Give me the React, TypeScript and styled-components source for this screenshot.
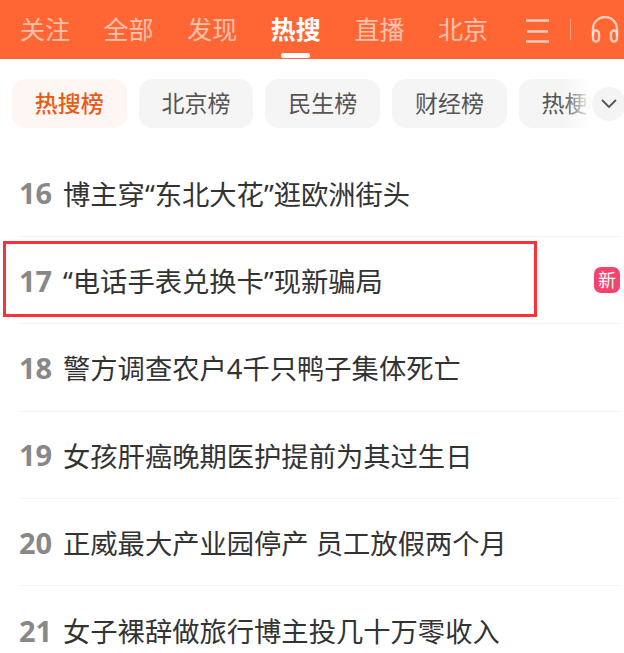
import React from 'react';
import styled, { createGlobalStyle } from 'styled-components';

const GlobalStyle = createGlobalStyle`
  html, body {
    margin: 0;
    padding: 0;
    background: #fff;
  }
  body {
    font-family: "Noto Sans", "Noto Sans CJK SC", sans-serif;
  }
`;

const Page = styled.div`
  position: relative;
  width: 624px;
  height: 653px;
  overflow: hidden;
`;

const TopBar = styled.div`
  display: flex;
  align-items: center;
  height: 59px;
  padding-left: 20px;
  background: #ff6633;
`;

const NavTabs = styled.div`
  display: flex;
  gap: 33.6px;
  width: 505px;
`;

const NavTab = styled.div<{ $active?: boolean }>`
  position: relative;
  font-size: 25px;
  line-height: 59px;
  height: 59px;
  font-weight: ${p => (p.$active ? 700 : 400)};
  color: ${p => (p.$active ? '#fff' : 'rgba(255, 255, 255, 0.62)')};

  ${p =>
    p.$active &&
    `&::after {
      content: '';
      position: absolute;
      left: 10px;
      right: 11px;
      bottom: 1px;
      height: 5px;
      border-radius: 3px;
      background: #fff;
    }`}
`;

const BarIcons = styled.div`
  display: flex;
  align-items: center;
  color: rgba(255, 255, 255, 0.68);
`;

const BarDivider = styled.div`
  width: 1px;
  height: 21px;
  margin: 0 20px 0 20px;
  background: rgba(255, 255, 255, 0.4);
`;

const ChipRow = styled.div`
  position: relative;
  display: flex;
  gap: 12px;
  height: 49px;
  margin-top: 20px;
  padding-left: 12px;
  overflow: hidden;
`;

const Chip = styled.div<{ $active?: boolean }>`
  flex: none;
  width: 114.7px;
  height: 49px;
  line-height: 49px;
  text-align: center;
  border-radius: 14px;
  font-size: 23px;
  font-weight: ${p => (p.$active ? 500 : 400)};
  color: ${p => (p.$active ? '#ea5a16' : '#555')};
  background: ${p => (p.$active ? '#fdf6f2' : '#f5f5f6')};
`;

const ChipFade = styled.div`
  position: absolute;
  top: 0;
  right: 0;
  width: 60px;
  height: 49px;
  background: linear-gradient(to right, rgba(255, 255, 255, 0), #fff 45%);
`;

const MoreButton = styled.div`
  position: absolute;
  top: 8px;
  right: -2px;
  width: 34px;
  height: 34px;
  display: flex;
  align-items: center;
  justify-content: center;
  border-radius: 50%;
  background: #f4f4f4;
  color: #555;
`;

const List = styled.div`
  margin-top: 21.5px;
  padding: 0 4px 0 20px;
`;

const Row = styled.div`
  display: flex;
  align-items: center;
  height: 87.4px;
  box-sizing: border-box;
  border-bottom: 1px solid #f4f4f4;

  &:last-child {
    border-bottom: none;
  }
`;

const Rank = styled.span`
  flex: none;
  width: 44px;
  margin-left: -1px;
  font-family: "Noto Sans", sans-serif;
  font-size: 29px;
  font-weight: 700;
  color: #888;
`;

const Title = styled.span`
  flex: 1;
  font-size: 27.3px;
  color: #333;
  white-space: nowrap;
`;

const NewBadge = styled.span`
  flex: none;
  width: 26px;
  height: 26px;
  line-height: 26px;
  text-align: center;
  border-radius: 7px;
  font-size: 18px;
  color: #fff;
  background: #f4436c;
`;

const Highlight = styled.div`
  position: absolute;
  left: 3px;
  top: 241px;
  width: 534px;
  height: 76px;
  box-sizing: border-box;
  border: 3px solid #f9323a;
  pointer-events: none;
`;

const navItems = ['关注', '全部', '发现', '热搜', '直播', '北京'];
const chips = ['热搜榜', '北京榜', '民生榜', '财经榜', '热梗榜'];
const rows = [
  { rank: 16, title: '博主穿“东北大花”逛欧洲街头' },
  { rank: 17, title: '“电话手表兑换卡”现新骗局', isNew: true },
  { rank: 18, title: '警方调查农户4千只鸭子集体死亡' },
  { rank: 19, title: '女孩肝癌晚期医护提前为其过生日' },
  { rank: 20, title: '正威最大产业园停产 员工放假两个月' },
  { rank: 21, title: '女子裸辞做旅行博主投几十万零收入' },
];

const MenuIcon = () => (
  <svg width="25" height="26" viewBox="0 0 25 26" fill="none" stroke="currentColor" strokeWidth="2.4">
    <path d="M1 3.5h23M2 14.5h21M1 24.5h23" />
  </svg>
);

const HeadphoneIcon = () => (
  <svg width="28" height="27" viewBox="0 0 28 27" fill="none" stroke="currentColor" strokeWidth="2.4" strokeLinecap="round">
    <path d="M2 19v-6a12 12 0 0 1 24 0v6" />
    <rect x="2" y="14.5" width="6" height="11" rx="3" />
    <rect x="20" y="14.5" width="6" height="11" rx="3" />
  </svg>
);

const ChevronIcon = () => (
  <svg width="18" height="12" viewBox="0 0 18 12" fill="none" stroke="currentColor" strokeWidth="1.8">
    <path d="M2 2l7 7 7-7" />
  </svg>
);

export default function App() {
  return (
    <Page>
      <GlobalStyle />
      <TopBar>
        <NavTabs>
          {navItems.map(item => (
            <NavTab key={item} $active={item === '热搜'}>{item}</NavTab>
          ))}
        </NavTabs>
        <BarIcons>
          <MenuIcon />
          <BarDivider />
          <HeadphoneIcon />
        </BarIcons>
      </TopBar>

      <ChipRow>
        {chips.map((chip, i) => (
          <Chip key={chip} $active={i === 0}>{chip}</Chip>
        ))}
        <ChipFade />
        <MoreButton><ChevronIcon /></MoreButton>
      </ChipRow>

      <List>
        {rows.map(row => (
          <Row key={row.rank}>
            <Rank>{row.rank}</Rank>
            <Title>{row.title}</Title>
            {row.isNew && <NewBadge>新</NewBadge>}
          </Row>
        ))}
      </List>

      <Highlight />
    </Page>
  );
}
